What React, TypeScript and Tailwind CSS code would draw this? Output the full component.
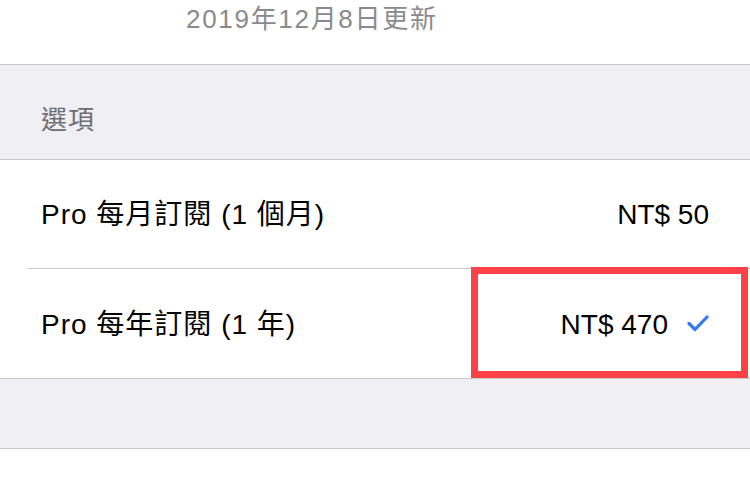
import React from 'react';

const font = { fontFamily: '"Liberation Sans", "Noto Sans CJK TC", sans-serif' };

function Check() {
    return (
        <svg width="22" height="18" viewBox="0 0 22 18" className="ml-[19px]">
            <path
                d="M2 8.5 L8 14.5 L20 2"
                fill="none"
                stroke="#3478f6"
                strokeWidth="3.2"
                strokeLinecap="round"
                strokeLinejoin="round"
            />
        </svg>
    );
}

function OptionRow({
    label,
    price,
    selected,
    last,
}: {
    label: string;
    price: string;
    selected?: boolean;
    last?: boolean;
}) {
    return (
        <div className="relative bg-white pl-[27px]">
            <div
                className={`flex h-[109px] items-center justify-between pr-[41px] ${
                    last ? '' : 'border-b border-[#c8c7cc]'
                }`}
            >
                <span className="pl-[14px] pt-[2px] text-[28px] tracking-[1px] text-[#000]">{label}</span>
                <div className="flex items-center">
                    <span className="pt-[2px] text-[28px] text-[#000]">{price}</span>
                    {selected && <Check />}
                </div>
            </div>
            {/* highlight box drawn over the selected row */}
            {selected && (
                <div className="pointer-events-none absolute left-[471px] right-[2px] top-[-2px] bottom-0 border-[7px] border-[#fc4246]" />
            )}
        </div>
    );
}

export default function App() {
    return (
        <div className="h-[480px] w-[750px] overflow-hidden bg-white" style={font}>
            <div className="h-[65px] border-b border-[#c8c7cc] pl-[186px]">
                <div className="pt-[2px] text-[26px] leading-[34px] tracking-[1.7px] text-[#8a8a8e]">2019年12月8日更新</div>
            </div>
            <div className="flex h-[95px] items-end border-b border-[#c8c7cc] bg-[#efeff4] pb-[19px] pl-[41px]">
                <span className="text-[26px] tracking-[1px] text-[#6d6d72]">選項</span>
            </div>
            <OptionRow label="Pro 每月訂閱 (1 個月)" price="NT$ 50" />
            <OptionRow label="Pro 每年訂閱 (1 年)" price="NT$ 470" selected last />
            <div className="h-[71px] border-y border-[#c8c7cc] bg-[#efeff4]" />
            <div className="h-[40px] bg-white" />
        </div>
    );
}
